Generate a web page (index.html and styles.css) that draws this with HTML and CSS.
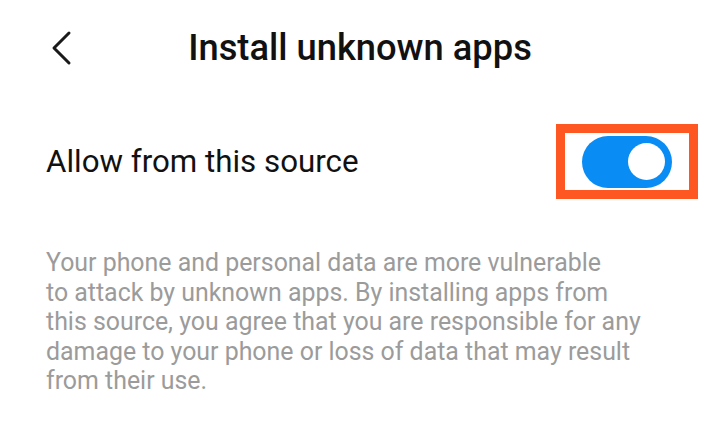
FILE: index.html
```html
<!DOCTYPE html>
<html>
<head>
<meta charset="utf-8">
<link rel="stylesheet" href="styles.css">
</head>
<body>
<div class="screen">
  <header class="topbar">
    <svg class="back" width="26" height="36" viewBox="0 0 26 36">
      <path d="M20 3 L5 18 L20 33" fill="none" stroke="#1a1a1a" stroke-width="3" stroke-linecap="round" stroke-linejoin="round"/>
    </svg>
    <h1 class="title">Install unknown apps</h1>
  </header>
  <div class="row">
    <span class="label">Allow from this source</span>
    <div class="highlight">
      <div class="toggle"><div class="knob"></div></div>
    </div>
  </div>
  <p class="desc">Your phone and personal data are more vulnerable<br>to attack by unknown apps. By installing apps from<br>this source, you agree that you are responsible for any<br>damage to your phone or loss of data that may result<br>from their use.</p>
</div>
</body>
</html>
```
FILE: styles.css
```css
html, body {
  margin: 0;
  padding: 0;
  background: #ffffff;
}
body {
  font-family: Roboto, "Noto Sans", sans-serif;
  width: 720px;
  height: 435px;
  overflow: hidden;
}
.screen {
  padding: 0 22px 0 46px;
}
.topbar {
  position: relative;
  display: flex;
  align-items: center;
  height: 76px;
  padding-top: 18px;
  box-sizing: border-box;
}
.back {
  display: block;
  margin-left: 3px;
  margin-top: 2px;
}
.title {
  position: absolute;
  left: -46px;
  right: -22px;
  top: 18px;
  bottom: 0;
  margin: 0;
  display: flex;
  align-items: center;
  justify-content: center;
  font-size: 36.3px;
  font-weight: 500;
  color: #111;
  letter-spacing: 0;
  pointer-events: none;
}
.row {
  display: flex;
  align-items: center;
  justify-content: space-between;
  margin-top: 48px;
}
.label {
  font-size: 31.3px;
  color: #111;
}
.highlight {
  width: 142px;
  height: 75px;
  box-sizing: border-box;
  border: 9px solid #fe5722;
  display: flex;
  align-items: center;
  justify-content: center;
}
.toggle {
  width: 90px;
  height: 52px;
  border-radius: 26px;
  background: #0a8cf5;
  display: flex;
  align-items: center;
  justify-content: flex-end;
  padding-right: 7px;
  box-sizing: border-box;
}
.knob {
  width: 37px;
  height: 37px;
  border-radius: 50%;
  background: #fff;
}
.desc {
  margin: 49px 0 0 0;
  width: 620px;
  font-size: 24.9px;
  line-height: 29.5px;
  color: #9b9b9b;
}
```
